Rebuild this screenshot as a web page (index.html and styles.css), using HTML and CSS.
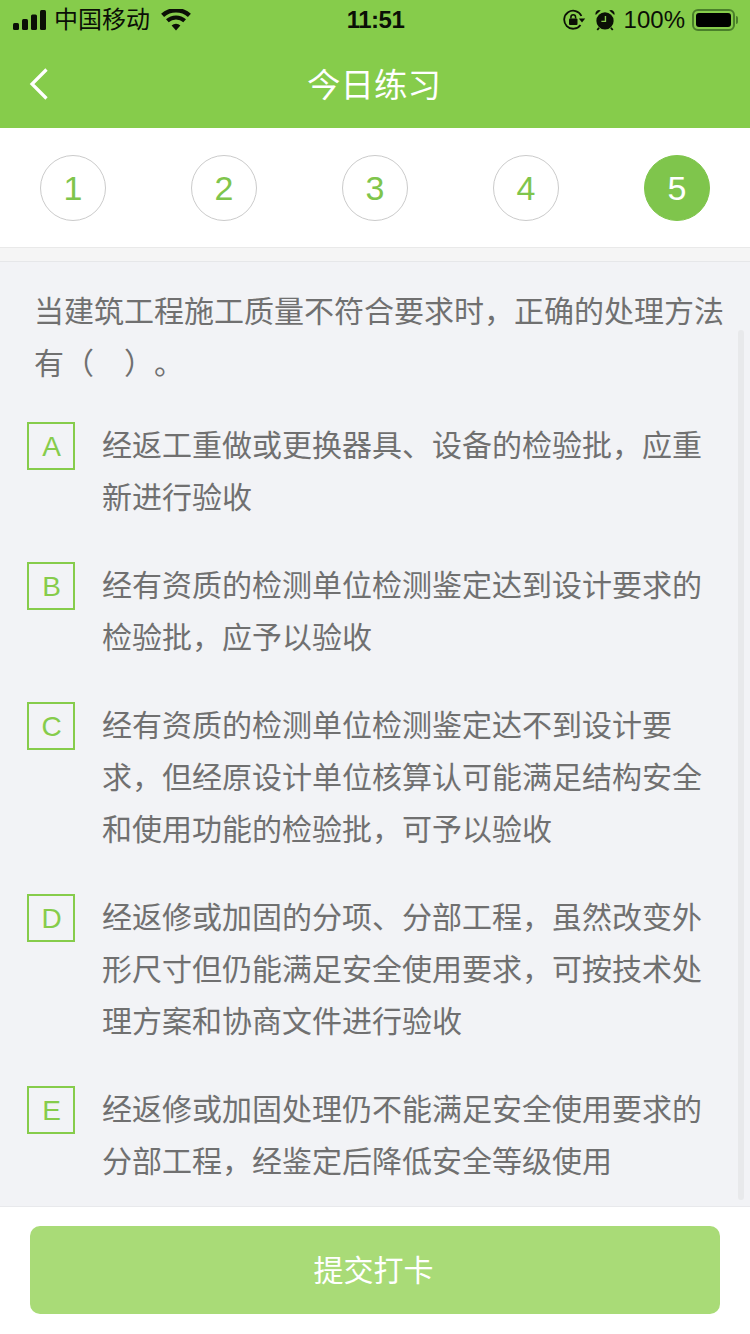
FILE: index.html
```html
<!DOCTYPE html>
<html lang="zh-CN">
<head>
<meta charset="utf-8">
<title>今日练习</title>
<link rel="stylesheet" href="styles.css">
</head>
<body>
<div class="page">
  <header class="header">
    <div class="status">
      <div class="status-left">
        <svg class="signal" width="34" height="20" viewBox="0 0 34 20"><rect x="0" y="13" width="6" height="7" rx="1.5"/><rect x="9" y="9" width="6" height="11" rx="1.5"/><rect x="18" y="4.5" width="6" height="15.5" rx="1.5"/><rect x="27" y="0" width="6" height="20" rx="1.5"/></svg>
        <span class="carrier">中国移动</span>
        <svg class="wifi" width="30" height="22" viewBox="0 0 30 22"><path d="M15 21.500l-4.400-5a6.400 6.400 0 0 1 8.800 0z"/><path d="M7.700 13.200l-2.700-3a15 15 0 0 1 20 0l-2.700 3a11 11 0 0 0-14.600 0z"/><path d="M3.100 8l-3-3.200a22 22 0 0 1 29.800 0l-3 3.200a18 18 0 0 0-23.800 0z"/></svg>
      </div>
      <div class="time">11:51</div>
      <div class="status-right">
        <svg class="lock" width="24" height="22" viewBox="0 0 24 22"><path d="M18.500 16A9 9 0 1 1 19.400 7" fill="none" stroke="#0b0f06" stroke-width="1.800"/><path d="M16.800 9.500h6.400l-3.200 4z"/><rect x="7" y="9.500" width="8.500" height="6.500" rx="1"/><path d="M8.900 9.500V8.200a2.350 2.350 0 0 1 4.700 0v1.300" fill="none" stroke="#0b0f06" stroke-width="1.500"/></svg>
        <svg class="alarm" width="20" height="22" viewBox="0 0 22 24"><circle cx="11" cy="13" r="9.500"/><path d="M0.800 6.500a4 4 0 0 1 5.500-5zM21.200 6.500a4 4 0 0 0-5.500-5z"/><path d="M4.500 20.500l-2 2.500M17.500 20.500l2 2.500" stroke="#0b0f06" stroke-width="2"/><path d="M11.500 7.500v6H7" fill="none" stroke="#86cc4b" stroke-width="1.500"/></svg>
        <span class="percent">100%</span>
        <div class="battery"><div class="battery-fill"></div></div>
        <div class="battery-cap"></div>
      </div>
    </div>
    <div class="nav">
      <svg class="back" width="22" height="32" viewBox="0 0 22 32"><path d="M18.500 1.500L4 16 18.500 30.500" fill="none" stroke="#fff" stroke-width="3.200"/></svg>
      <h1 class="title">今日练习</h1>
    </div>
  </header>

  <nav class="steps">
    <div class="step">1</div>
    <div class="step">2</div>
    <div class="step">3</div>
    <div class="step">4</div>
    <div class="step step-active">5</div>
  </nav>
  <div class="band"></div>

  <main class="content">
    <div class="scrollbar"></div>
    <p class="question">当建筑工程施工质量不符合要求时，正确的处理方法有（　）。</p>
    <div class="options">
      <div class="option"><div class="letter">A</div><div class="option-text">经返工重做或更换器具、设备的检验批，应重新进行验收</div></div>
      <div class="option"><div class="letter">B</div><div class="option-text">经有资质的检测单位检测鉴定达到设计要求的检验批，应予以验收</div></div>
      <div class="option"><div class="letter">C</div><div class="option-text">经有资质的检测单位检测鉴定达不到设计要求，但经原设计单位核算认可能满足结构安全和使用功能的检验批，可予以验收</div></div>
      <div class="option"><div class="letter">D</div><div class="option-text">经返修或加固的分项、分部工程，虽然改变外形尺寸但仍能满足安全使用要求，可按技术处理方案和协商文件进行验收</div></div>
      <div class="option"><div class="letter">E</div><div class="option-text">经返修或加固处理仍不能满足安全使用要求的分部工程，经鉴定后降低安全等级使用</div></div>
    </div>
  </main>

  <footer class="footer">
    <button class="submit" type="button">提交打卡</button>
  </footer>
</div>
</body>
</html>
```

FILE: styles.css
```css
* { box-sizing: border-box; }
html, body { margin: 0; padding: 0; }
body {
  font-family: "Liberation Sans", "Noto Sans CJK SC", sans-serif;
  background: #fff;
}
.page {
  width: 750px;
  height: 1334px;
  display: flex;
  flex-direction: column;
  overflow: hidden;
}
.header { background: #86cc4b; height: 128px; flex: none; }
.status {
  height: 40px;
  padding: 0 12px 0 13px;
  display: grid;
  grid-template-columns: 1fr auto 1fr;
  align-items: center;
  color: #0b0f06;
}
.status-left { display: flex; align-items: center; }
.signal { fill: #0b0f06; margin-right: 7px; }
.carrier { font-size: 24px; line-height: 40px; }
.wifi { fill: #0b0f06; margin-left: 11px; }
.time { font-size: 24px; font-weight: 700; line-height: 40px; letter-spacing: -0.5px; }
.status-right { display: flex; align-items: center; justify-content: flex-end; fill: #0b0f06; }
.lock { margin-right: 9px; }
.alarm { margin-right: 9px; }
.percent { font-size: 24px; line-height: 40px; margin-right: 7px; }
.battery {
  width: 43px;
  height: 22px;
  border: 2px solid #4a7f2a;
  border-radius: 6px;
  padding: 2px;
}
.battery-fill { height: 100%; background: #000; border-radius: 3px; }
.battery-cap {
  width: 2px;
  height: 8px;
  margin-left: 1px;
  background: #4a7f2a;
  border-radius: 0 2px 2px 0;
}
.nav {
  height: 88px;
  position: relative;
  display: flex;
  align-items: center;
  justify-content: center;
  padding: 0 2px 4px 0;
}
.back { position: absolute; left: 28px; top: 28px; }
.title {
  margin: 0;
  font-size: 33.500px;
  font-weight: 400;
  color: #fff;
}
.steps {
  flex: none;
  height: 119px;
  background: #fff;
  padding: 27px 40px 0;
  display: flex;
  justify-content: space-between;
  align-items: flex-start;
}
.step {
  width: 66px;
  height: 66px;
  border: 1px solid #cbcbcb;
  border-radius: 50%;
  color: #7fc54c;
  font-size: 34px;
  display: flex;
  align-items: center;
  justify-content: center;
}
.step-active { background: #7fc54c; border-color: #7fc54c; color: #fff; }
.band {
  flex: none;
  height: 15px;
  background: #f5f5f5;
  border-top: 1px solid #e9e9e9;
  border-bottom: 1px solid #e6e7e9;
}
.content {
  flex: 1;
  min-height: 0;
  position: relative;
  background: #f2f3f6;
  padding: 24px 0 0;
}
.scrollbar {
  position: absolute;
  left: 738px;
  top: 68px;
  width: 6px;
  height: 870px;
  background: #e8e9eb;
  border-radius: 3px;
}
.question {
  margin: 0 0 32px;
  padding: 0 20px 0 34px;
  font-size: 30px;
  line-height: 52px;
  color: #707070;
  text-spacing-trim: space-all;
}
.options { display: flex; flex-direction: column; gap: 36px; }
.option { display: flex; align-items: flex-start; padding-left: 27px; }
.letter {
  flex: none;
  width: 48px;
  height: 48px;
  border: 2px solid #86cc4b;
  color: #86cc4b;
  font-size: 28px;
  padding: 2px 0 0 1px;
  display: flex;
  align-items: center;
  justify-content: center;
}
.option-text {
  width: 600px;
  margin: -2px 0 2px 27px;
  font-size: 30px;
  line-height: 52px;
  color: #707070;
  line-break: strict;
}
.footer {
  flex: none;
  height: 128px;
  background: #fff;
  border-top: 1px solid #e8e9ec;
  padding: 19px 30px 0;
}
.submit {
  display: block;
  width: 690px;
  height: 88px;
  border: 0;
  border-radius: 10px;
  background: #a9db77;
  color: #fff;
  font-family: inherit;
  font-size: 30px;
  padding: 0 3px 4px 0;
}
```
